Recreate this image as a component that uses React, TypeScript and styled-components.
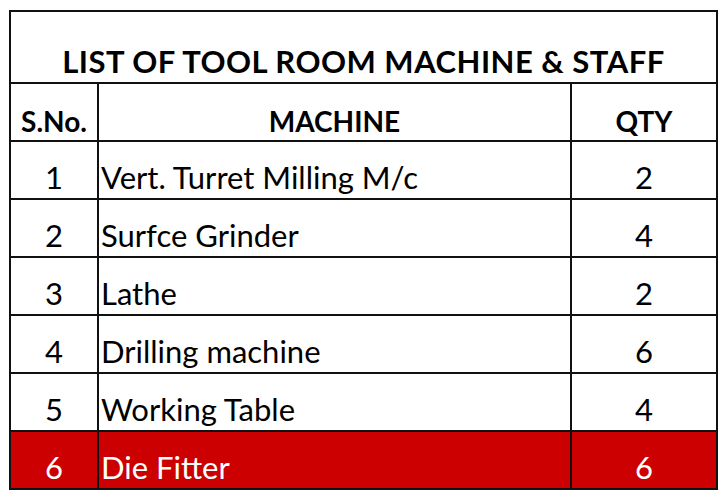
import React from 'react';
import styled, { createGlobalStyle } from 'styled-components';

const GlobalStyle = createGlobalStyle`
  body {
    margin: 0;
    background: #ffffff;
    font-family: Lato, "Liberation Sans", sans-serif;
  }
`;

const Page = styled.div`
  padding: 10px 0 0 9px;
`;

const Table = styled.table`
  border-collapse: collapse;
  table-layout: fixed;
  width: 707px;
  color: #000000;
`;

const TitleCell = styled.th`
  box-sizing: border-box;
  height: 72px;
  border: 2px solid #111111;
  padding: 0 0 5px;
  vertical-align: bottom;
  text-align: center;
  font-size: 31px;
  font-weight: 700;
  letter-spacing: 0.5px;
  line-height: 1;
  white-space: nowrap;
`;

interface CellProps {
  readonly align?: 'left' | 'center';
}

const HeadCell = styled.th`
  box-sizing: border-box;
  height: 58px;
  border: 2px solid #111111;
  padding: 0 0 5px;
  vertical-align: bottom;
  text-align: center;
  font-size: 28px;
  font-weight: 700;
  line-height: 1;
`;

interface RowProps {
  readonly highlight?: boolean;
}

const Row = styled.tr<RowProps>`
  background: ${({ highlight }) => (highlight ? '#cc0000' : '#ffffff')};
  color: ${({ highlight }) => (highlight ? '#ffffff' : '#000000')};
`;

const Cell = styled.td<CellProps>`
  box-sizing: border-box;
  height: 58px;
  border: 2px solid #111111;
  padding: 0 0 5px ${({ align }) => (align === 'left' ? '2px' : '0')};
  vertical-align: bottom;
  text-align: ${({ align }) => align ?? 'center'};
  font-size: 31px;
  line-height: 1;
  white-space: nowrap;
`;

const machines = [
  { no: 1, name: 'Vert. Turret Milling M/c', qty: 2 },
  { no: 2, name: 'Surfce Grinder', qty: 4 },
  { no: 3, name: 'Lathe', qty: 2 },
  { no: 4, name: 'Drilling machine', qty: 6 },
  { no: 5, name: 'Working Table', qty: 4 },
  { no: 6, name: 'Die Fitter', qty: 6, highlight: true },
];

export default function App() {
  return (
    <>
      <GlobalStyle />
      <Page>
        <Table>
          <colgroup>
            <col style={{ width: 88 }} />
            <col style={{ width: 473 }} />
            <col style={{ width: 146 }} />
          </colgroup>
          <thead>
            <tr>
              <TitleCell colSpan={3}>LIST OF TOOL ROOM MACHINE &amp; STAFF</TitleCell>
            </tr>
            <tr>
              <HeadCell>S.No.</HeadCell>
              <HeadCell>MACHINE</HeadCell>
              <HeadCell>QTY</HeadCell>
            </tr>
          </thead>
          <tbody>
            {machines.map((m) => (
              <Row key={m.no} highlight={m.highlight}>
                <Cell>{m.no}</Cell>
                <Cell align="left">{m.name}</Cell>
                <Cell>{m.qty}</Cell>
              </Row>
            ))}
          </tbody>
        </Table>
      </Page>
    </>
  );
}
